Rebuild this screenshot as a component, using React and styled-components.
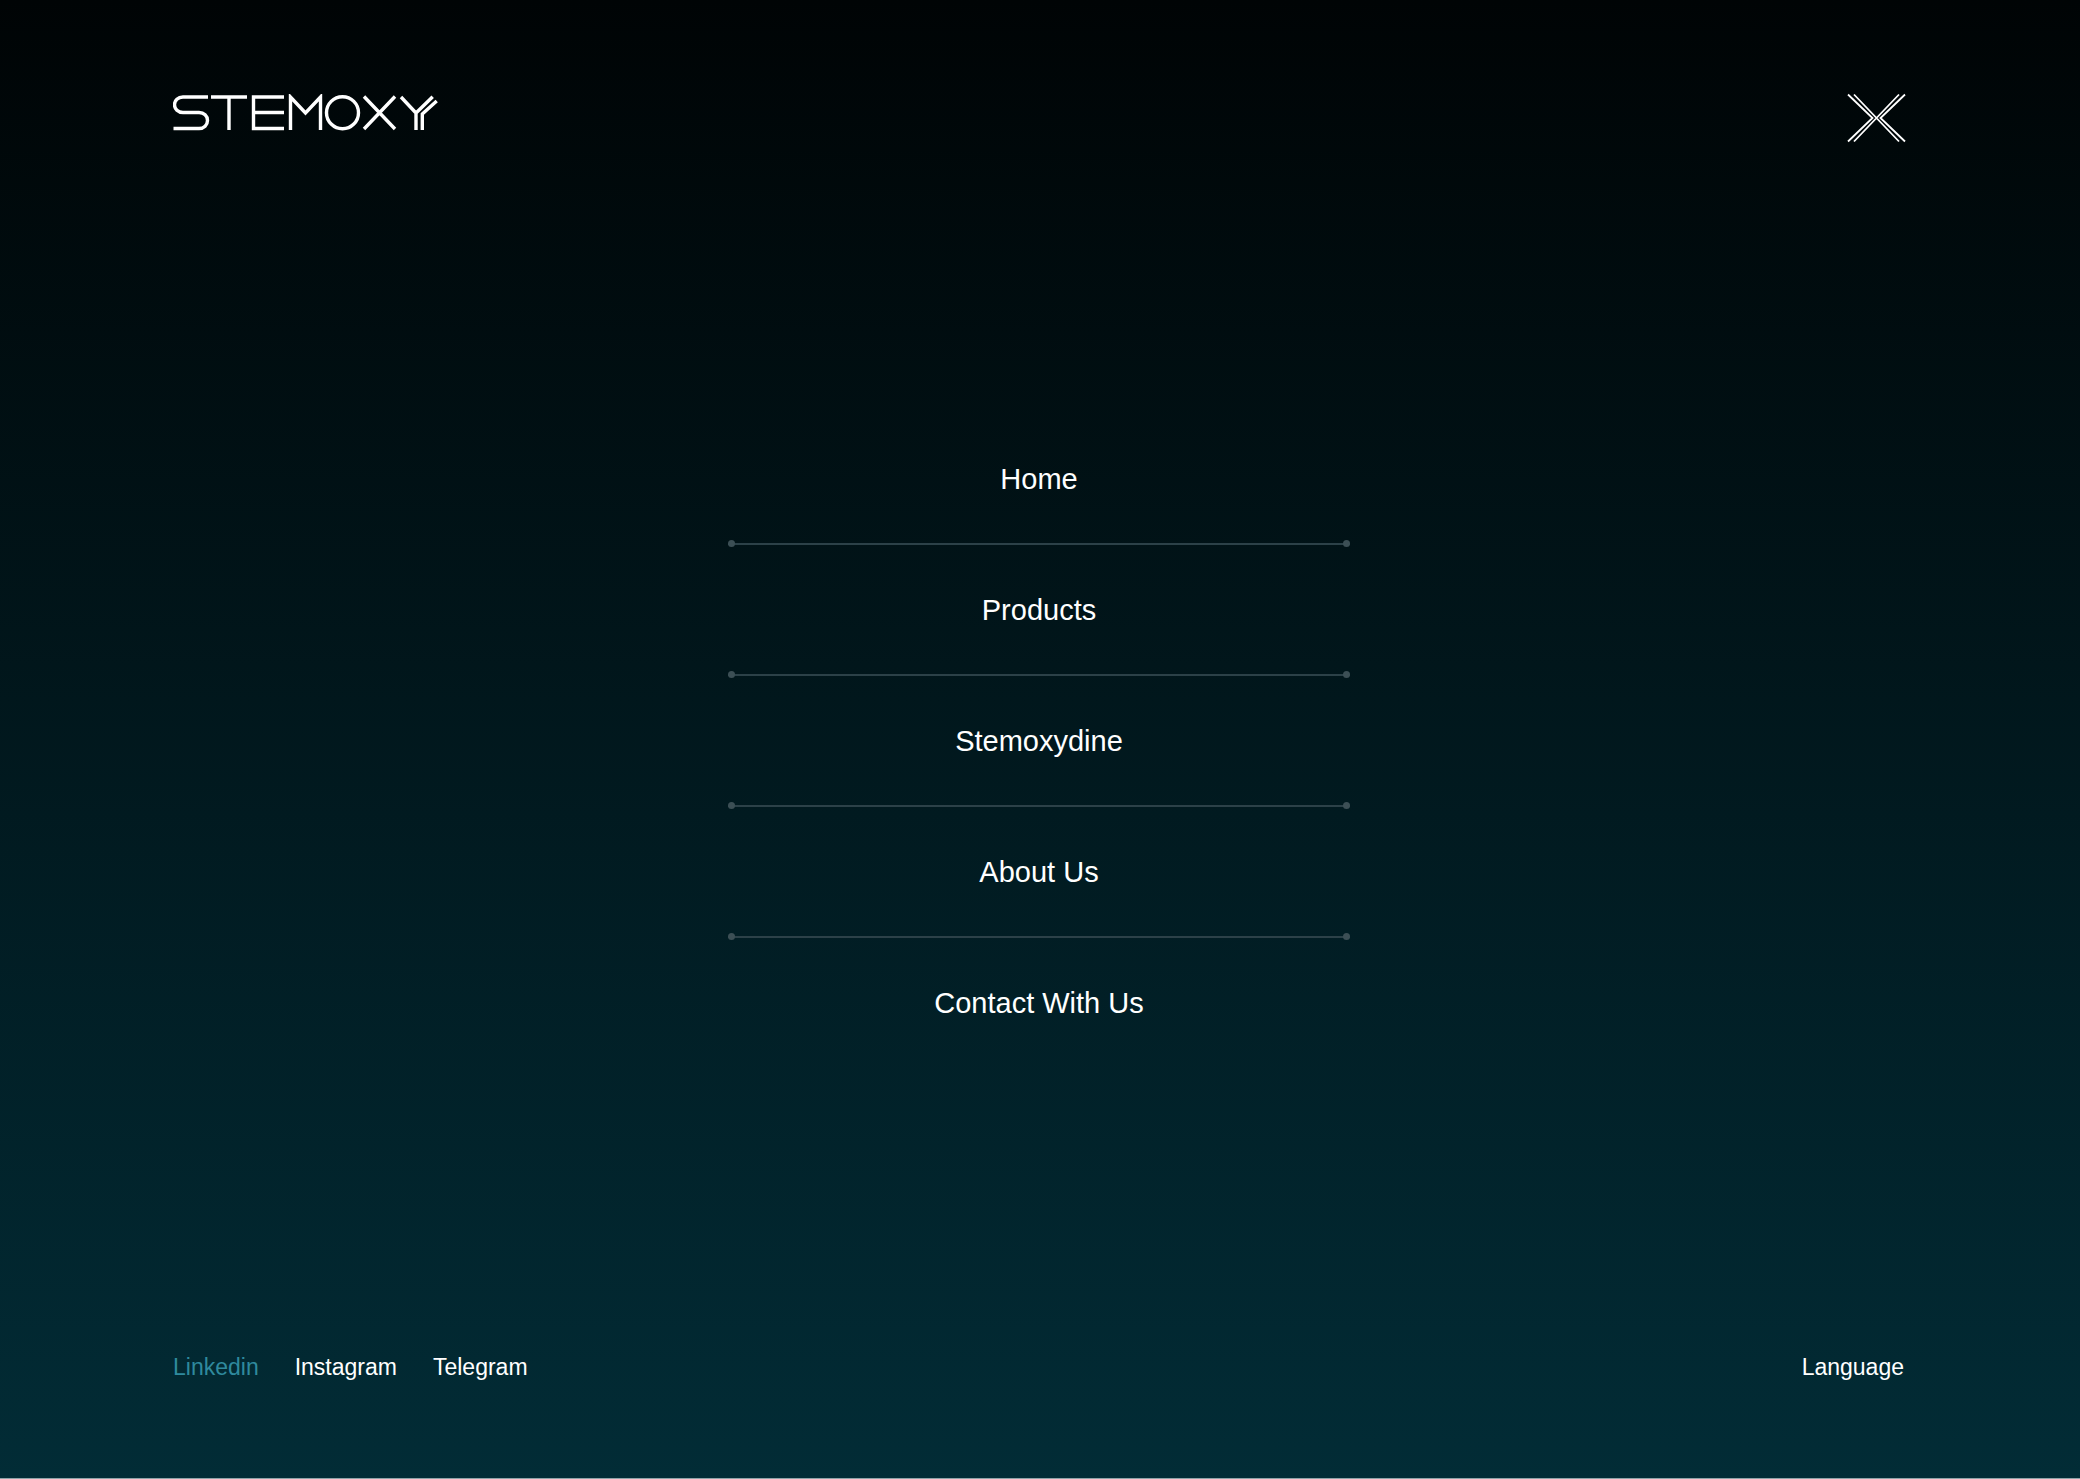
import styled, { createGlobalStyle } from "styled-components";

const GlobalStyle = createGlobalStyle`
    html, body {
        margin: 0;
        padding: 0;
        background: #022c36;
    }
`;

const Page = styled.div`
    box-sizing: border-box;
    width: 100%;
    height: 1479px;
    padding: 93px 175px 0 173px;
    display: flex;
    flex-direction: column;
    background: linear-gradient(180deg, #000405 0%, #022c36 100%);
    border-bottom: 1px solid #8fa3a8;
    font-family: "Liberation Sans", Arial, sans-serif;
    color: #fff;
`;

const Header = styled.header`
    display: flex;
    justify-content: space-between;
    align-items: flex-start;
    height: 319.5px;
`;

const LogoMark = styled.svg`
    display: block;
    margin-top: 1px;
`;

const CloseButton = styled.button`
    padding: 0;
    margin-right: -1px;
    border: 0;
    background: none;
    cursor: pointer;
    display: block;
`;

const Menu = styled.nav`
    width: 622px;
    margin: 0 auto;
    display: flex;
    flex-direction: column;
`;

const MenuItem = styled.a`
    display: block;
    height: 131px;
    line-height: 132px;
    font-size: 29px;
    text-align: center;
    color: #fff;
    text-decoration: none;
`;

const Rule = styled.div`
    position: relative;
    height: 2px;
    margin: -1px 0;
    background: #2c4148;

    &::before,
    &::after {
        content: "";
        position: absolute;
        top: -2.5px;
        width: 7px;
        height: 7px;
        border-radius: 50%;
        background: #3c4f55;
    }
    &::before { left: 0; }
    &::after { right: 0; }
`;

const Footer = styled.footer`
    margin-top: auto;
    height: 125px;
    padding-right: 1px;
    display: flex;
    justify-content: space-between;
    align-items: flex-start;
    font-size: 23px;
    line-height: 28px;
`;

const Socials = styled.div`
    display: flex;
    gap: 36px;
`;

const FooterLink = styled.a`
    color: ${(p) => (p.$active ? "#2f8a9e" : "#fff")};
    text-decoration: none;
`;

const Logo = () => (
    <LogoMark width="266" height="37" viewBox="0 0 266 37" fill="none" stroke="#fff" strokeWidth="3.4" role="img" aria-label="Stemoxy">
        <path d="M35 3H10C5 3 1.5 6.5 1.5 10.75S5 18.5 10 18.5H26C31 18.5 34.5 22 34.5 26.5S31 34.5 26 34.5H0.5" />
        <path d="M38 3H74M56 3V36" />
        <path d="M111 3H80.5V34.5H111M80.5 18.5H111" />
        <path d="M117.5 36V3L132.5 19L147.5 3V36" />
        <circle cx="169.5" cy="18.7" r="16" />
        <path d="M191 2.5L222 35M222 2.5L191 35" />
        <path d="M228 3L243 19V36M243 19L259.7 2.7M249.3 36V20L263.7 7" />
    </LogoMark>
);

const CloseIcon = () => (
    <svg width="59" height="50" viewBox="0 0 59 50" fill="none" stroke="#fff" strokeWidth="1.8" role="img" aria-label="Close">
        <path d="M1 1.5L25.5 25L1 48.5M7 1.5L52 48.5M52 1.5L7 48.5M58 1.5L33.5 25L58 48.5" />
    </svg>
);

const items = ["Home", "Products", "Stemoxydine", "About Us", "Contact With Us"];

const App = () => (
    <>
        <GlobalStyle />
        <Page>
            <Header>
                <Logo />
                <CloseButton aria-label="Close menu">
                    <CloseIcon />
                </CloseButton>
            </Header>
            <Menu>
                {items.map((item, i) => (
                    <div key={item}>
                        {i > 0 && <Rule />}
                        <MenuItem href="#">{item}</MenuItem>
                    </div>
                ))}
            </Menu>
            <Footer>
                <Socials>
                    <FooterLink href="#" $active>Linkedin</FooterLink>
                    <FooterLink href="#">Instagram</FooterLink>
                    <FooterLink href="#">Telegram</FooterLink>
                </Socials>
                <FooterLink href="#">Language</FooterLink>
            </Footer>
        </Page>
    </>
);

export default App;
